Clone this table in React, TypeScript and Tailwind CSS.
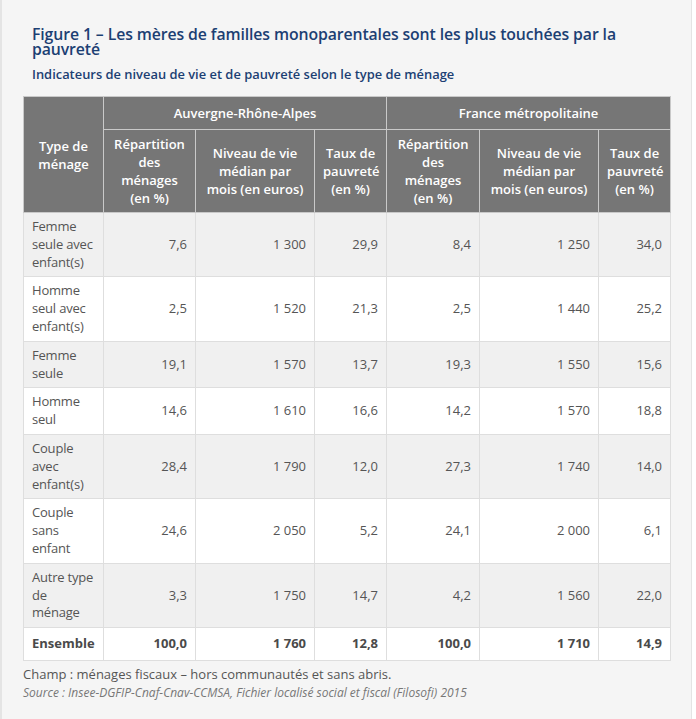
import type { ReactNode } from 'react';

interface Row {
  label: ReactNode;
  values: string[];
}

const NB = '\u00a0';

const ROWS: Row[] = [
  { label: <>Femme<br />seule avec<br />enfant(s)</>, values: ['7,6', `1${NB}300`, '29,9', '8,4', `1${NB}250`, '34,0'] },
  { label: <>Homme<br />seul avec<br />enfant(s)</>, values: ['2,5', `1${NB}520`, '21,3', '2,5', `1${NB}440`, '25,2'] },
  { label: <>Femme<br />seule</>, values: ['19,1', `1${NB}570`, '13,7', '19,3', `1${NB}550`, '15,6'] },
  { label: <>Homme<br />seul</>, values: ['14,6', `1${NB}610`, '16,6', '14,2', `1${NB}570`, '18,8'] },
  { label: <>Couple<br />avec<br />enfant(s)</>, values: ['28,4', `1${NB}790`, '12,0', '27,3', `1${NB}740`, '14,0'] },
  { label: <>Couple<br />sans<br />enfant</>, values: ['24,6', `2${NB}050`, '5,2', '24,1', `2${NB}000`, '6,1'] },
  { label: <>Autre type<br />de<br />ménage</>, values: ['3,3', `1${NB}750`, '14,7', '4,2', `1${NB}560`, '22,0'] },
];

const TOTAL = ['100,0', `1${NB}760`, '12,8', '100,0', `1${NB}710`, '14,9'];

const COL_WIDTHS = ['w-[80px]', 'w-[92px]', 'w-[119px]', 'w-[72px]', 'w-[93px]', 'w-[119px]', 'w-[72px]'];

const th = 'border border-[#c9c9c9] px-2 py-[5px] align-middle text-center font-semibold text-white';
const td = 'border border-[#dedede] px-2 py-[5px] leading-[17.8px] align-middle';

function SubHeaders() {
  return (
    <>
      <th className={th}>Répartition<br />des<br />ménages<br />(en %)</th>
      <th className={th}>Niveau de vie<br />médian par<br />mois (en euros)</th>
      <th className={th}>Taux de<br />pauvreté<br />(en %)</th>
    </>
  );
}

export default function App() {
  return (
    <div
      className="min-h-[719px] w-[692px] border-l-2 border-r border-[#e4e4e4] bg-[#f5f5f5]"
      style={{ fontFamily: '"Open Sans", "Noto Sans", sans-serif' }}
    >
      <div className="px-[21px] pt-[27px]">
        <h2 className="ml-[9px] text-[15.8px] font-semibold leading-[14.5px] tracking-[-0.1px] text-[#1c3f73]">
          Figure 1 – Les mères de familles monoparentales sont les plus touchées par la pauvreté
        </h2>
        <p className="ml-[9px] mt-[9px] text-[12.9px] font-semibold leading-[18px] text-[#1c3f73]">
          Indicateurs de niveau de vie et de pauvreté selon le type de ménage
        </p>

        <table className="mt-[13px] w-[648px] table-fixed border-collapse border border-[#dedede] text-[13px] leading-[18px] text-[#555]">
          <colgroup>
            {COL_WIDTHS.map((w, i) => (
              <col key={i} className={w} />
            ))}
          </colgroup>
          <thead className="bg-[#767676]">
            <tr className="h-[33px]">
              <th rowSpan={2} className={th}>Type de<br />ménage</th>
              <th colSpan={3} className={th}>Auvergne-Rhône-Alpes</th>
              <th colSpan={3} className={th}>France métropolitaine</th>
            </tr>
            <tr>
              <SubHeaders />
              <SubHeaders />
            </tr>
          </thead>
          <tbody>
            {ROWS.map((row, i) => (
              <tr key={i} className={i % 2 === 0 ? 'bg-[#f0f0f0]' : 'bg-white'}>
                <td className={`${td} whitespace-nowrap text-left tracking-[-0.2px]`}>{row.label}</td>
                {row.values.map((v, j) => (
                  <td key={j} className={`${td} text-right`}>{v}</td>
                ))}
              </tr>
            ))}
            <tr className="h-[33px] bg-white font-bold text-[#4a4a4a]">
              <td className={`${td} text-left`}>Ensemble</td>
              {TOTAL.map((v, j) => (
                <td key={j} className={`${td} text-right`}>{v}</td>
              ))}
            </tr>
          </tbody>
        </table>

        <p className="mt-[4px] text-[13px] leading-[18px] text-[#555]">
          Champ : ménages fiscaux – hors communautés et sans abris.
        </p>
        <p className="mt-[1px] text-[12px] italic leading-[18px] text-[#777]">
          Source : Insee-DGFIP-Cnaf-Cnav-CCMSA, Fichier localisé social et fiscal (Filosofi) 2015
        </p>
      </div>
    </div>
  );
}
